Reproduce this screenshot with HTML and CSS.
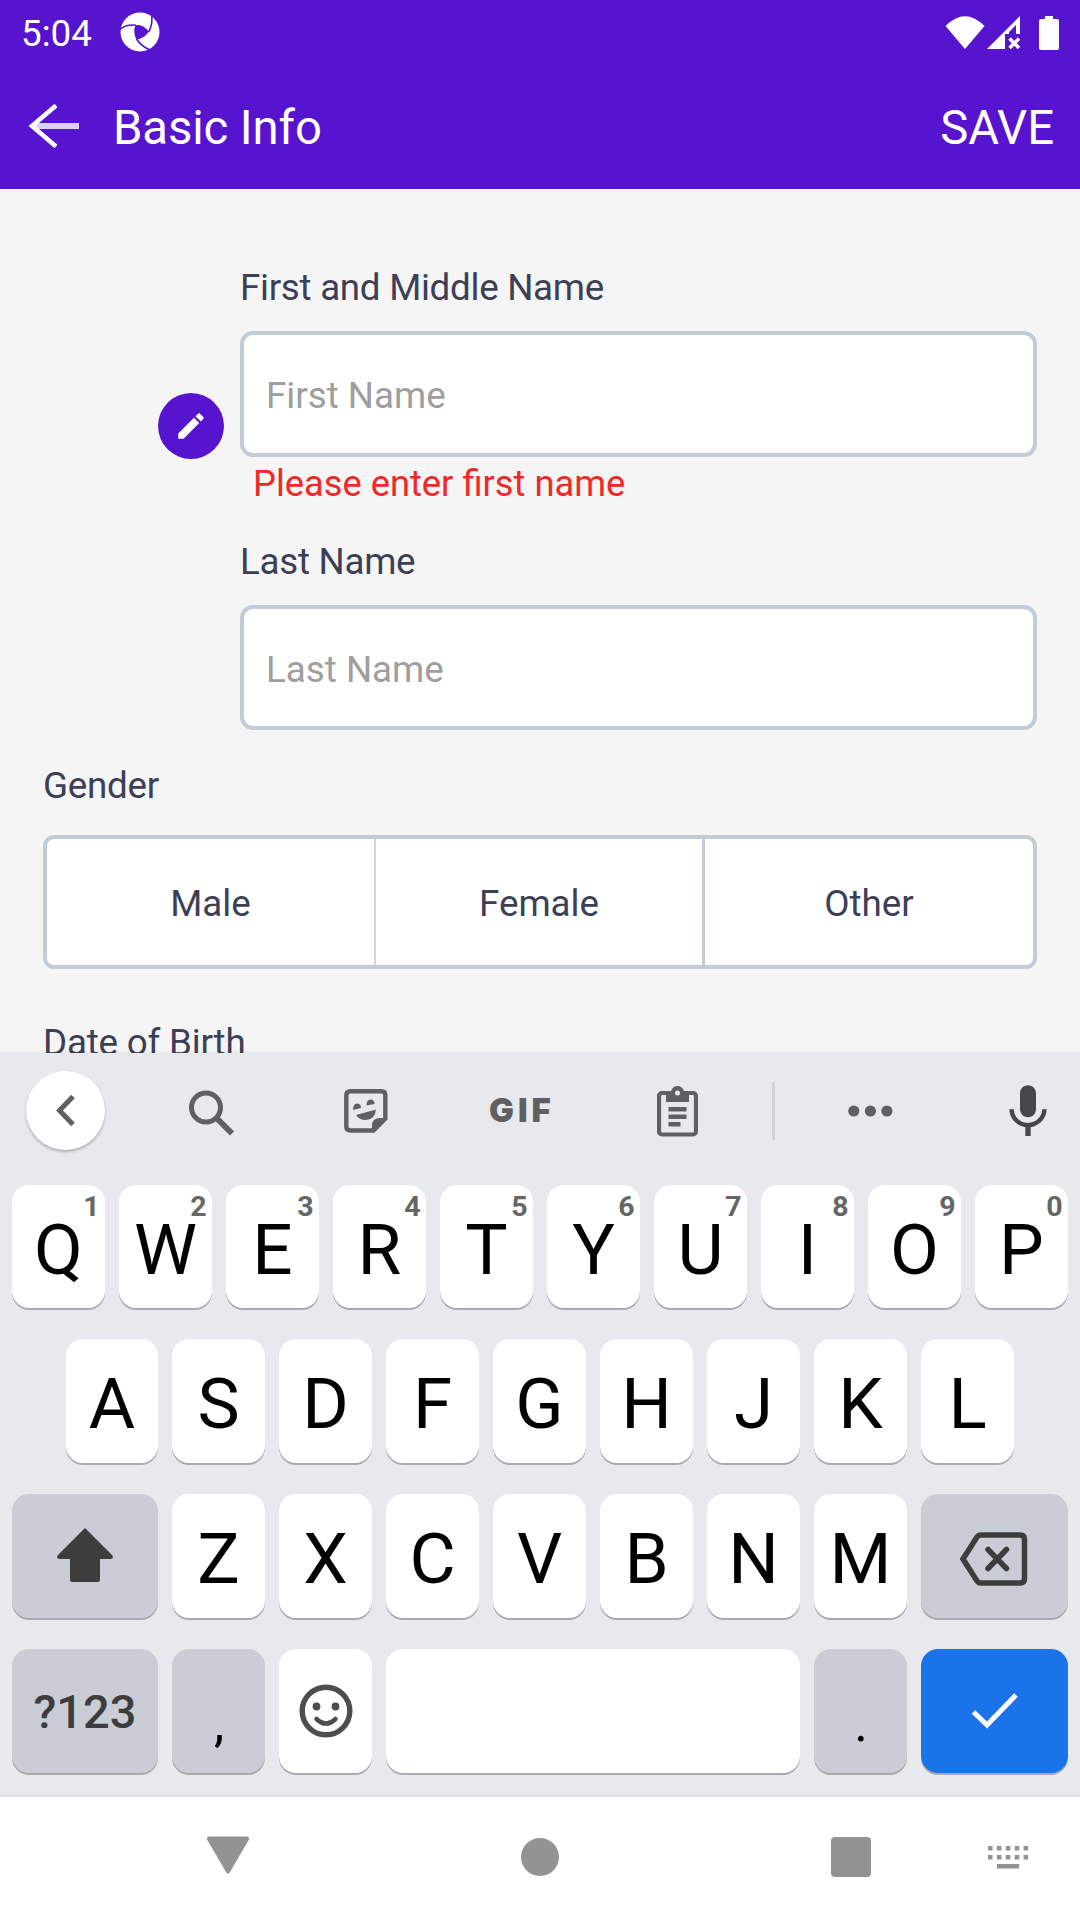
FILE: index.html
```html
<!DOCTYPE html>
<html lang="en">
<head>
<meta charset="utf-8">
<title>Basic Info</title>
<link rel="stylesheet" href="styles.css">
</head>
<body>
<div class="screen">
  <header class="header">
    <div class="status">
      <span class="clock">5:04</span>
      <svg class="status-app" width="40" height="40" viewBox="0 0 40 40"><circle cx="20" cy="20" r="19.5" fill="#fff"/><path d="M15.500 13.200Q23 11.500 28.800 19.700Q24 26.500 16.500 27.500Q12.500 20 15.500 13.200Z" fill="#5714cf"/><path d="M0 17.500Q6 12 16 13.200M28.500 20Q33 13 31.500 2M16.500 27Q21 34 30 38" fill="none" stroke="#5714cf" stroke-width="1.600"/></svg>
      <span class="spacer"></span>
      <svg width="132" height="40" viewBox="0 0 132 40" fill="#fff"><path d="M0 12Q19.500-7.500 39 12L19.500 35Z" transform="translate(.5 0)"/><path d="M42 35L75 2V20H71V11L64 18V20H60V35Z"/><path d="M64.500 24.500L74 34M74 24.500L64.500 34" stroke="#fff" stroke-width="3.500"/><path d="M100 2H108V5H112Q114 5 114 7V34Q114 36 112 36H96Q94 36 94 34V7Q94 5 96 5H100Z"/></svg>
    </div>
    <div class="appbar">
      <svg width="54" height="46" viewBox="0 0 54 46" fill="none" stroke="#fff"><path d="M8 24H52" stroke-width="6" opacity=".8"/><path d="M29 3.500L5 24L29 44.500" stroke-width="4.500"/></svg>
      <h1 class="title">Basic Info</h1>
      <span class="save">SAVE</span>
    </div>
  </header>

  <main class="form">
    <div class="names">
      <div class="avatar">
        <button class="edit"><svg width="34" height="34" viewBox="0 0 24 24" fill="#fff"><path d="M3 17.250V21h3.750L17.810 9.940l-3.750-3.750L3 17.250zM20.710 7.040c.39-.39.39-1.020 0-1.410l-2.340-2.340c-.39-.39-1.020-.39-1.410 0l-1.830 1.830 3.750 3.750 1.830-1.830z"/></svg></button>
      </div>
      <div class="fields">
        <label class="label">First and Middle Name</label>
        <div class="input">First Name</div>
        <p class="error">Please enter first name</p>
        <label class="label label-last">Last Name</label>
        <div class="input input-last">Last Name</div>
      </div>
    </div>
    <div class="label label-gender">Gender</div>
    <div class="segments">
      <div class="segment">Male</div>
      <div class="segment">Female</div>
      <div class="segment">Other</div>
    </div>
    <div class="label label-birth">Date of Birth</div>
  </main>

  <section class="keyboard">
    <div class="tools">
      <span class="tool-back"><svg width="79" height="79" viewBox="0 0 79 79" fill="none" stroke="#5f6062" stroke-width="5"><path d="M47 25.500L33.500 39.500L47 53.500"/></svg></span>
      <svg class="tool-search" width="46" height="46" viewBox="0 0 46 46" fill="none" stroke="#5f6062"><circle cx="17" cy="17.500" r="14.500" stroke-width="5"/><path d="M27.500 28L43 43.500" stroke-width="6"/></svg>
      <svg class="tool-sticker" width="44" height="44" viewBox="0 0 44 44"><path d="M6.500 2.200H37.500Q41.300 2.200 41.300 6V29.500L29.500 41.500H6.500Q2.300 41.500 2.300 37.500V6Q2.300 2.200 6.500 2.200Z" fill="none" stroke="#5f6062" stroke-width="4.400"/><path d="M43 29H36Q28 29 28 37V43H30L43 30ZM12 26L32 20.500Q31 30.500 22 31Q15 31 12 26ZM9 21Q9 14.500 13 14.500T17 19ZM22.500 16.500Q22.500 10.500 26.500 10.500T30.500 15Z" fill="#5f6062"/></svg>
      <span class="tool-gif">GIF</span>
      <svg class="tool-clip" width="41" height="51" viewBox="0 0 41 51"><rect x="2" y="7" width="37" height="41.500" rx="3" fill="none" stroke="#5f6062" stroke-width="4.200"/><path d="M9 5H14Q16 0 20.500 0T27 5H32V16H9ZM11.500 21H29.500V25.500H11.500ZM11.500 28.500H29.500V33H11.500ZM11.500 36H23.500V40.500H11.500Z" fill="#5f6062"/><circle cx="20.500" cy="7" r="2.500" fill="#e8e9ed"/></svg>
      <span class="tool-divider"></span>
      <svg class="tool-more" width="45" height="12" viewBox="0 0 45 12" fill="#5f6062"><circle cx="5.800" cy="6" r="5.600"/><circle cx="22.400" cy="6" r="5.600"/><circle cx="38.900" cy="6" r="5.600"/></svg>
      <svg class="tool-mic" width="64" height="64" viewBox="0 0 24 24" fill="#464749"><path d="M12 14c1.660 0 3-1.340 3-3V5c0-1.660-1.340-3-3-3S9 3.340 9 5v6c0 1.660 1.340 3 3 3zm5.300-3c0 3-2.540 5.100-5.300 5.100S6.700 14 6.700 11H5c0 3.410 2.720 6.230 6 6.720V21h2v-3.280c3.280-.48 6-3.300 6-6.720h-1.700z"/></svg>
    </div>

    <div class="row row-1">
      <div class="key">Q<sup class="hint">1</sup></div>
      <div class="key">W<sup class="hint">2</sup></div>
      <div class="key">E<sup class="hint">3</sup></div>
      <div class="key">R<sup class="hint">4</sup></div>
      <div class="key">T<sup class="hint">5</sup></div>
      <div class="key">Y<sup class="hint">6</sup></div>
      <div class="key">U<sup class="hint">7</sup></div>
      <div class="key">I<sup class="hint">8</sup></div>
      <div class="key">O<sup class="hint">9</sup></div>
      <div class="key">P<sup class="hint">0</sup></div>
    </div>
    <div class="row row-2">
      <div class="key">A</div>
      <div class="key">S</div>
      <div class="key">D</div>
      <div class="key">F</div>
      <div class="key">G</div>
      <div class="key">H</div>
      <div class="key">J</div>
      <div class="key">K</div>
      <div class="key">L</div>
    </div>
    <div class="row">
      <div class="key key-dark key-shift"><svg class="shift" width="56" height="54" viewBox="0 0 56 54" fill="#3d3d3e"><path d="M28 0L55.500 27.500Q57 31 53.500 31H43V51.500Q43 54 40.500 54H15.500Q13 54 13 51.500V31H2.500Q-1 31 .5 27.500Z"/></svg></div>
      <div class="key">Z</div>
      <div class="key">X</div>
      <div class="key">C</div>
      <div class="key">V</div>
      <div class="key">B</div>
      <div class="key">N</div>
      <div class="key">M</div>
      <div class="key key-dark key-wide"><svg class="backspace" width="68" height="54" viewBox="0 0 68 54" fill="none" stroke="#3d3d3e"><path d="M20.500 3H60Q64.500 3 64.500 7.500V46.500Q64.500 51 60 51H20.500Q18.500 51 17 49L3 27L17 5Q18.500 3 20.500 3Z" stroke-width="5.500"/><path d="M28 17.500L46.500 36.500M46.500 17.500L28 36.500" stroke-width="5.500" stroke-linecap="round"/></svg></div>
    </div>
    <div class="row">
      <div class="key key-dark key-shift key-symbols">?123</div>
      <div class="key key-dark key-point">,</div>
      <div class="key key-emoji"><svg width="54" height="54" viewBox="0 0 54 54"><circle cx="27" cy="27" r="23.800" fill="none" stroke="#4d4d4e" stroke-width="5.400"/><circle cx="17.500" cy="22.500" r="3.900" fill="#4d4d4e"/><circle cx="36.500" cy="22.500" r="3.900" fill="#4d4d4e"/><path d="M17.500 35Q27 44 36.500 35" fill="none" stroke="#4d4d4e" stroke-width="4.500" stroke-linecap="round"/></svg></div>
      <div class="key key-space"></div>
      <div class="key key-dark key-point">.</div>
      <div class="key key-enter key-wide"><svg width="48" height="36" viewBox="0 0 48 36" fill="none" stroke="#fff" stroke-width="5"><path d="M2.500 19L16 32L45 2"/></svg></div>
    </div>
  </section>

  <nav class="nav">
    <svg class="nav-back" width="42" height="38" viewBox="0 0 42 38" fill="#939393"><path d="M2 .5H40Q42 .5 42 3.500L23 36Q21 39 19 36L0 3.500Q0 .5 2 .5Z"/></svg>
    <span class="nav-home"></span>
    <span class="nav-recent"></span>
    <svg class="nav-ime" width="41" height="23" viewBox="0 0 41 23" fill="#939393"><path d="M0 0h4.500v4.500H0zM8.900 0h4.500v4.500H8.900zM17.800 0h4.500v4.500h-4.500zM26.700 0h4.500v4.500h-4.500zM35.600 0h4.500v4.500h-4.500zM0 9h4.500v4.500H0zM8.900 9h4.500v4.500H8.900zM17.800 9h4.500v4.500h-4.500zM26.700 9h4.500v4.500h-4.500zM35.600 9h4.500v4.500h-4.500zM8.900 18h22.300v4.500H8.900z"/></svg>
  </nav>
</div>
</body>
</html>
```
FILE: styles.css
```css
* { box-sizing: border-box; margin: 0; padding: 0; }
body { width: 1080px; height: 1920px; overflow: hidden; font-family: Roboto, sans-serif; }
svg { display: block; flex: none; }

.screen { display: flex; flex-direction: column; width: 1080px; height: 1920px; background: #f5f5f5; }

/* Status bar and app bar */
.header { flex: none; height: 189px; background: #5714cf; color: #fff; }
.status { display: flex; height: 64px; padding: 12px 3px 0 21px; }
.clock { width: 99px; font-size: 36.75px; line-height: 43px; }
.spacer { flex: 1; }
.status > svg:last-child { margin-top: 2px; }
.appbar { display: flex; padding: 38px 26px 0 27px; }
.title { flex: 1; margin-left: 32px; font-size: 47.25px; font-weight: 400; line-height: 52px; letter-spacing: -.1px; }
.save { font-size: 47.25px; line-height: 52px; }

/* Form */
.form { flex: none; height: 864px; overflow: hidden; padding: 77px 43px 0; color: #3c3f55; font-size: 36.75px; }
.names { display: flex; }
.avatar { width: 197px; padding: 127px 0 0 115px; }
.edit { display: flex; align-items: center; justify-content: center; width: 66px; height: 66px; border: 0; border-radius: 50%; background: #5714cf; }
.fields { flex: 1; }
.label { display: block; height: 65px; line-height: 43px; letter-spacing: -.28px; }
.input { height: 126px; padding: 0 22px; border: 4px solid #c3ccd6; border-radius: 13px; background: #fff; color: #9e9e9e; line-height: 121px; }
.error { padding-left: 13px; height: 83px; color: #f22727; font-size: 36.3px; line-height: 53px; }
.input-last { height: 125px; }
.label-gender { height: 71px; margin-top: 34px; }
.segments { display: flex; height: 134px; border: 4px solid #c3ccd6; border-radius: 11px; background: #fff; line-height: 129px; text-align: center; }
.segment { width: 327px; }
.segment + .segment { width: 328px; border-left: 2px solid #cfd6dd; }
.segment:last-child { flex: 1; border-left: 3px solid #c3ccd6; }
.label-birth { margin-top: 52px; letter-spacing: -.2px; }

/* On-screen keyboard */
.keyboard { flex: none; height: 744px; background: #e8e9ed; border-bottom: 3px solid #dfe0e1; box-shadow: 0 -1px 3px rgba(0, 0, 0, .08); }
.tools { display: flex; align-items: flex-start; height: 132px; padding: 18px 0 0 26px; }
.tool-back { width: 79px; height: 79px; border-radius: 50%; background: #fff; box-shadow: 0 2px 3px rgba(0, 0, 0, .25); }
.tool-search { margin: 19px 0 0 84px; }
.tool-sticker { margin: 18px 0 0 109px; }
.tool-gif { width: 168px; margin-left: 101px; color: #5f6062; font: 900 33px/79px Inter, sans-serif; letter-spacing: 4px; }
.tool-clip { margin: 15px 0 0 0; }
.tool-divider { width: 3px; height: 58px; margin: 11px 0 0 74px; background: #ced3d7; }
.tool-more { margin: 34px 0 0 73px; }
.tool-mic { margin: 9px 0 0 103px; }

.row { display: flex; gap: 14px; height: 155px; padding: 0 12px; }
.row-1 { height: 154px; }
.row-1 .key { height: 123px; padding-top: 6px; }
.row-2 { padding: 0 66px; }
.row-2 .key:first-child { width: 92px; }
.key { position: relative; display: flex; flex: none; align-items: center; justify-content: center; width: 93px; height: 124px; padding-top: 4px; border-radius: 17px; background: #fff; box-shadow: 0 2px 0 #a9aaad; color: #000; font-size: 71px; line-height: 1; }
.hint { position: absolute; top: 7px; right: 5.5px; color: #666; font-size: 28.5px; font-weight: 700; line-height: 29px; }
.key-dark { background: #cbcdd6; }
.key-shift { width: 146px; padding-top: 2px; }
.shift { margin-top: -4px; }
.key-wide { width: 147px; padding-top: 0; }
.backspace { margin: 5px 0 0 -1px; }
.key-symbols { padding-top: 1px; color: #3d3d3e; font-size: 47px; font-weight: 500; }
.key-point { font-size: 52px; padding-top: 25px; padding-left: 1px; }
.key-emoji { padding: 0 0 1px; }
.key-space { width: 414px; }
.key-enter { background: #1a73e8; }

/* System navigation */
.nav { display: flex; flex: 1; align-items: flex-start; padding: 40px 0 0 207px; background: #fff; }
.nav-back { margin-top: -1px; }
.nav-home { width: 38px; height: 38px; margin: 1px 0 0 272px; border-radius: 50%; background: #939393; }
.nav-recent { width: 40px; height: 40px; margin-left: 272px; border-radius: 4px; background: #939393; }
.nav-ime { margin: 9px 0 0 117px; }
```
